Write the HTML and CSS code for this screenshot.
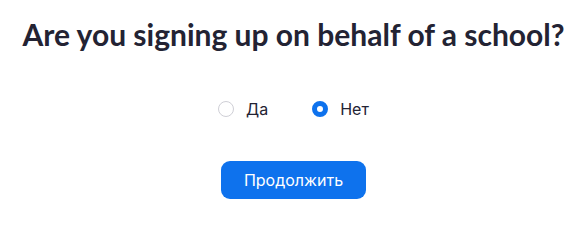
FILE: index.html
```html
<!DOCTYPE html>
<html lang="ru">
<head>
<meta charset="utf-8">
<link rel="stylesheet" href="styles.css">
</head>
<body>
<main class="page">
  <h1 class="title">Are you signing up on behalf of a school?</h1>
  <div class="options">
    <label class="option">
      <span class="radio"></span>
      <span class="label">Да</span>
    </label>
    <label class="option">
      <span class="radio checked"></span>
      <span class="label">Нет</span>
    </label>
  </div>
  <button class="btn">Продолжить</button>
</main>
</body>
</html>
```
FILE: styles.css
```css
html, body {
  margin: 0;
  padding: 0;
  background: #ffffff;
}
.page {
  display: flex;
  flex-direction: column;
  align-items: center;
  padding-top: 15px;
}
.title {
  margin: 0;
  font-family: Lato, "Noto Sans", sans-serif;
  font-weight: 700;
  font-size: 30px;
  line-height: 38px;
  color: #232333;
}
.options {
  display: flex;
  gap: 44px;
  margin-top: 46px;
}
.option {
  display: flex;
  align-items: center;
  gap: 12px;
  font-family: Inter, Roboto, sans-serif;
  font-size: 16px;
  line-height: 20px;
  color: #232333;
}
.radio {
  width: 16px;
  height: 16px;
  box-sizing: border-box;
  border-radius: 50%;
  border: 1.5px solid #cfcfd6;
  background: #fff;
}
.radio.checked {
  border: 5px solid #0e72ed;
}
.btn {
  margin-top: 42px;
  width: 145px;
  height: 38px;
  border: none;
  border-radius: 9px;
  background: #0e72ed;
  color: #ffffff;
  font-family: Inter, Roboto, sans-serif;
  font-size: 16px;
  padding: 0;
}
```
